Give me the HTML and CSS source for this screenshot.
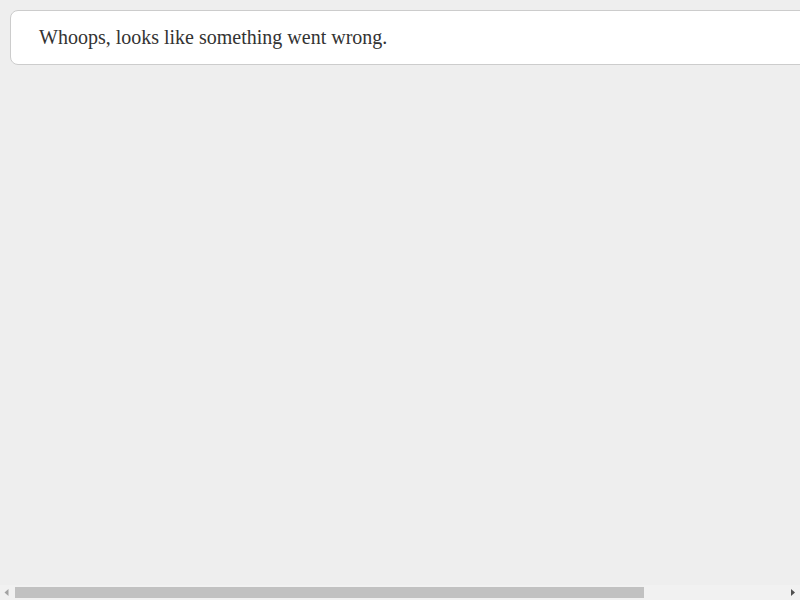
FILE: index.html
```html
<!DOCTYPE html>
<html>
<head>
<meta charset="utf-8">
<title>Error</title>
<link rel="stylesheet" href="styles.css">
</head>
<body>
<div class="page">
  <div class="reset-content">
    <h1 class="message">Whoops, looks like something went wrong.</h1>
  </div>
</div>
<div class="hscroll">
  <div class="hscroll-btn">
    <svg width="15" height="15" viewBox="0 0 15 15"><polygon points="4.5,7.5 8.5,4 8.5,11" fill="#a3a3a3"/></svg>
  </div>
  <div class="hscroll-track">
    <div class="hscroll-thumb"></div>
  </div>
  <div class="hscroll-btn">
    <svg width="15" height="15" viewBox="0 0 15 15"><polygon points="6,4 10,7.5 6,11" fill="#505050"/></svg>
  </div>
</div>
</body>
</html>
```
FILE: styles.css
```css
html {
  background: #eee;
}
body {
  margin: 0;
  padding: 0;
}
.page {
  padding: 10px 0 0 10px;
  overflow: hidden;
}
.reset-content {
  width: 970px;
}
.message {
  margin: 0;
  background: #fff;
  border: 1px solid #ccc;
  border-radius: 8px;
  padding: 15px 28px;
  font-family: "Liberation Serif", "Times New Roman", serif;
  font-size: 20px;
  font-weight: normal;
  line-height: 23px;
  color: #333;
}
.hscroll {
  position: fixed;
  left: 0;
  right: 0;
  bottom: 0;
  height: 15px;
  display: flex;
  background: #f1f1f1;
}
.hscroll-btn {
  width: 15px;
  height: 15px;
  flex: none;
}
.hscroll-btn svg {
  display: block;
}
.hscroll-track {
  flex: 1;
  padding: 2px 0;
}
.hscroll-thumb {
  width: 629px;
  height: 11px;
  background: #c1c1c1;
}
```
